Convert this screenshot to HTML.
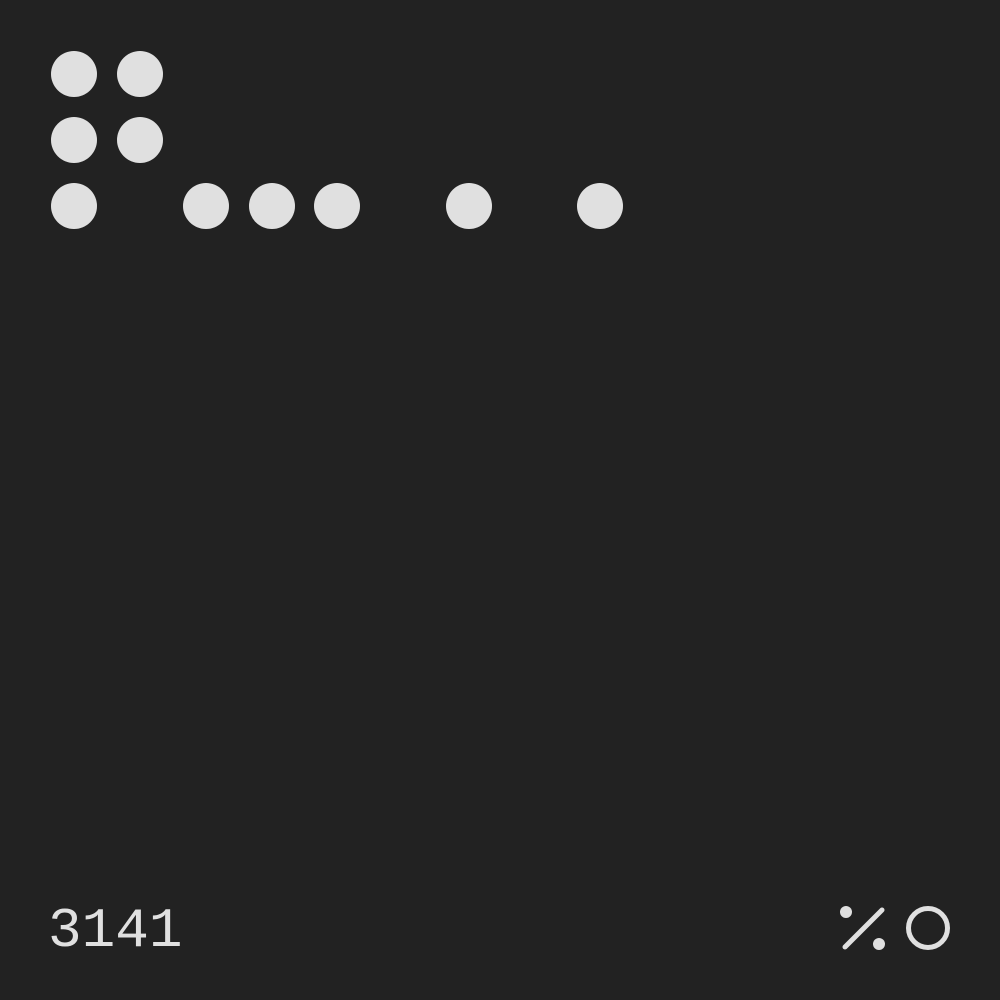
<!DOCTYPE html>
<html><head><style>
html,body{margin:0;padding:0;background:#222222;width:1000px;height:1000px;overflow:hidden}
.t{position:absolute;left:48px;top:896px;font:56px "Liberation Mono",monospace;color:#e0e0e0;line-height:70px;letter-spacing:0px}
</style></head><body>
<svg width="1000" height="1000" style="position:absolute;left:0;top:0">
<g fill="#e0e0e0">
<circle cx="74" cy="74" r="23"/><circle cx="140" cy="74" r="23"/>
<circle cx="74" cy="140" r="23"/><circle cx="140" cy="140" r="23"/>
<circle cx="74" cy="206" r="23"/><circle cx="206" cy="206" r="23"/><circle cx="272" cy="206" r="23"/><circle cx="337" cy="206" r="23"/><circle cx="469" cy="206" r="23"/><circle cx="600" cy="206" r="23"/>
<circle cx="846" cy="912" r="6"/><circle cx="879" cy="944" r="6"/>
</g>
<line x1="845" y1="947" x2="882" y2="910" stroke="#e0e0e0" stroke-width="5" stroke-linecap="round"/>
<circle cx="928" cy="928" r="19.5" fill="none" stroke="#e0e0e0" stroke-width="5"/>
</svg>
<div class="t">3141</div>
</body></html>
